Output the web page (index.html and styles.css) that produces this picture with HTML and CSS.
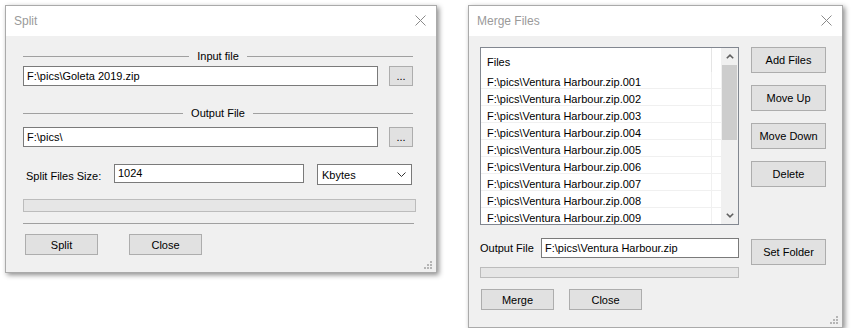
FILE: index.html
```html
<!DOCTYPE html>
<html lang="en">
<head>
<meta charset="UTF-8">
<title>Split / Merge</title>
<link rel="stylesheet" href="styles.css">
</head>
<body>
<div class="desk">

  <!-- split dialog -->
  <div class="win split">
    <div class="titlebar">
      <span class="title">Split</span>
      <svg class="x" width="11" height="11" viewBox="0 0 11 11"><path d="M0.5 0.5L10.5 10.5M10.5 0.5L0.5 10.5" stroke="#8a8a8a" stroke-width="1"/></svg>
    </div>
    <div class="sbody">
      <div class="group"><span>Input file</span></div>
      <div class="filerow">
        <div class="tb wide">F:\pics\Goleta 2019.zip</div>
        <button class="btn dots">...</button>
      </div>
      <div class="group g2"><span>Output File</span></div>
      <div class="filerow r2">
        <div class="tb wide">F:\pics\</div>
        <button class="btn dots">...</button>
      </div>
      <div class="sizerow">
        <span class="lbl">Split Files Size:</span>
        <div class="tb size">1024</div>
        <div class="combo">Kbytes
          <svg width="9" height="5" viewBox="0 0 9 5"><path d="M0.5 0.5L4.5 4.5L8.5 0.5" stroke="#333" fill="none"/></svg>
        </div>
      </div>
      <div class="prog sprog"></div>
      <div class="sep"></div>
      <div class="btnrow">
        <button class="btn act">Split</button>
        <button class="btn act">Close</button>
      </div>
    </div>
    <svg class="grip" width="8" height="8" viewBox="0 0 8 8"><path d="M6 0h2v2h-2zM3 3h2v2h-2zM6 3h2v2h-2zM0 6h2v2h-2zM3 6h2v2h-2zM6 6h2v2h-2z" fill="#b5b5b5"/></svg>
  </div>

  <!-- merge dialog -->
  <div class="win merge">
    <div class="titlebar">
      <span class="title">Merge Files</span>
      <svg class="x" width="11" height="11" viewBox="0 0 11 11"><path d="M0.5 0.5L10.5 10.5M10.5 0.5L0.5 10.5" stroke="#8a8a8a" stroke-width="1"/></svg>
    </div>
    <div class="mbody">
      <div class="mgrid">
        <div class="list">
          <div class="cols" id="rows">
            <div class="hdr"><span class="cell">Files</span></div>
          </div>
          <div class="sb">
            <div class="arr"><svg width="8" height="5" viewBox="0 0 8 5"><path d="M0.8 4.3L4 1.2L7.2 4.3" stroke="#606060" stroke-width="1.6" fill="none"/></svg></div>
            <div class="thumb"></div>
            <div class="track"></div>
            <div class="arr"><svg width="8" height="5" viewBox="0 0 8 5"><path d="M0.8 0.7L4 3.8L7.2 0.7" stroke="#606060" stroke-width="1.6" fill="none"/></svg></div>
          </div>
        </div>
        <div class="side">
          <button class="btn tall">Add Files</button>
          <button class="btn tall">Move Up</button>
          <button class="btn tall">Move Down</button>
          <button class="btn tall">Delete</button>
        </div>
        <div class="outrow">
          <span class="olbl">Output File</span>
          <div class="tb out">F:\pics\Ventura Harbour.zip</div>
        </div>
        <div><button class="btn tall setf">Set Folder</button></div>
      </div>
      <div class="prog mprog"></div>
      <div class="btnrow mbtns">
        <button class="btn act">Merge</button>
        <button class="btn act">Close</button>
      </div>
    </div>
    <svg class="grip" width="8" height="8" viewBox="0 0 8 8"><path d="M6 0h2v2h-2zM3 3h2v2h-2zM6 3h2v2h-2zM0 6h2v2h-2zM3 6h2v2h-2zM6 6h2v2h-2z" fill="#b5b5b5"/></svg>
  </div>

</div>

<script>
/* list rows */
const rows=document.getElementById("rows");
for(let i=1;i<=9;i++){
  const r=document.createElement("div"); r.className="row";
  r.innerHTML=`<span class="cell">F:\\pics\\Ventura Harbour.zip.00${i}</span>`;
  rows.appendChild(r);
}
</script>
</body>
</html>
```

FILE: styles.css
```css
body{margin:0;background:#fff;color:#000;font-family:"Liberation Sans",Arial,sans-serif;font-size:11px}
.desk{display:flex;align-items:flex-start;gap:31px;padding:5px 0 0 5px}
/* window frame */
.win{position:relative;background:#f0f0f0;border:1px solid #aaa;box-shadow:2px 2px 5px rgba(0,0,0,.45)}
.split{width:430px;height:266px}
.merge{width:373px;height:321px}
.titlebar{height:30px;background:#fff;display:flex;align-items:center;justify-content:space-between;padding:0 10px 0 8px}
.title{font-size:12px;color:#9a9a9a}
.x{display:block;margin-top:-2px}
.grip{position:absolute;right:4px;bottom:3px}
/* common controls */
.tb{box-sizing:border-box;height:20px;border:1px solid #7a7a7a;background:#fff;padding:0 3px;line-height:18px;white-space:nowrap}
.btn{box-sizing:border-box;border:1px solid #adadad;background:#e1e1e1;font-family:inherit;font-size:11px;color:#000;padding:0;margin:0}
.prog{box-sizing:border-box;border:1px solid #bcbcbc;background:#e6e6e6}
/* split */
.sbody{padding:13px 0 0 17px}
.group{display:flex;align-items:center;gap:8px;width:390px;height:14px}
.group::before,.group::after{content:"";flex:1;border-top:1px solid #a0a0a0}
.group.g2{margin-top:20px}
.filerow{display:flex;gap:11px;margin-top:3px}
.filerow.r2{margin-top:7px}
.wide{width:355px}
.dots{width:24px;height:20px;line-height:14px}
.sizerow{display:flex;align-items:flex-start;margin-top:17px;height:21px}
.lbl{width:88px;padding:6px 0 0 3px}
.size{width:190px;height:19px;line-height:17px}
.combo{box-sizing:border-box;width:95px;height:21px;margin-left:13px;border:1px solid #7a7a7a;background:#fff;
       display:flex;align-items:center;justify-content:space-between;padding:0 5px 0 4px}
.sprog{width:393px;height:13px;margin-top:14px}
.sep{width:391px;border-top:1px solid #a0a0a0;margin-top:11px}
.btnrow{display:flex;gap:31px;margin-top:10px;padding-left:2px}
.act{width:73px;height:21px}
/* merge */
.mbody{padding:11px 0 0 11px}
.mgrid{display:grid;grid-template-columns:259px 75px;grid-template-rows:178px 20px;column-gap:12px;row-gap:13px}
.list{box-sizing:border-box;height:178px;border:1px solid #828790;background:#fff;display:flex;overflow:hidden}
.cols{flex:1;overflow:hidden}
.hdr{height:24px;display:flex}
.hdr .cell{border-right:1px solid #e5e5e5;padding-top:4px;line-height:20px}
.row{height:16px;border-bottom:1px solid #f0f0f0;display:flex}
.cell{box-sizing:border-box;width:231px;padding:3px 0 0 6px;line-height:14px;border-right:1px solid #f0f0f0;white-space:nowrap}
.sb{width:17px;background:#f0f0f0;display:flex;flex-direction:column}
.arr{height:17px;display:flex;align-items:center;justify-content:center}
.thumb{height:75px;margin:0 1px;background:#cdcdcd}
.track{flex:1}
.side{display:flex;flex-direction:column;gap:12px}
.tall{width:75px;height:26px}
.outrow{display:flex;align-items:center}
.olbl{width:61px}
.out{width:198px}
.setf{margin-top:1px}
.mprog{width:259px;height:11px;margin-top:9px}
.mbtns{gap:15px;margin-top:11px;padding-left:1px}
```
